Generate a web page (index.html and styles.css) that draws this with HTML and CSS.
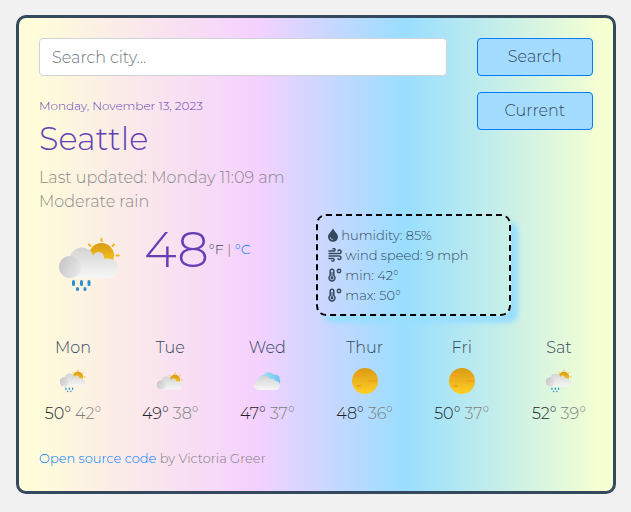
FILE: index.html
```html
<!DOCTYPE html>
<html lang="en">
<head>
<meta charset="utf-8">
<title>Weather</title>
<link rel="stylesheet" href="styles.css">
</head>
<body>
<svg class="defs" aria-hidden="true">
  <defs>
    <linearGradient id="sunFill" x1="0" y1="0" x2="0" y2="1"><stop offset="0" stop-color="#d99a12"/><stop offset="1" stop-color="#ffd027"/></linearGradient>
    <linearGradient id="cloudFill" x1="0" y1="0" x2="0" y2="1"><stop offset="0" stop-color="#d3d3d3"/><stop offset="1" stop-color="#f7f7f7"/></linearGradient>
    <linearGradient id="puffFill" x1="0" y1="0.2" x2="1" y2="0.7"><stop offset="0" stop-color="#c4c4c4"/><stop offset="1" stop-color="#e8e8e8"/></linearGradient>
    <linearGradient id="skyFill" x1="0" y1="0" x2="1" y2="0"><stop offset="0" stop-color="#b9e3f5"/><stop offset="1" stop-color="#6cc5f2"/></linearGradient>
    <symbol id="sunCloud" viewBox="0 -6 61 60">
      <path stroke="#fbb320" stroke-width="2" stroke-linecap="round" d="M42.500-4v2M30 1.500l1.500 1.500M55 1.500l-1.500 1.500M57.500 12.500h2.500"/>
      <circle cx="42.500" cy="12.500" r="12.500" fill="url(#sunFill)"/>
      <path fill="url(#cloudFill)" d="M11 35V13A12.500 12.500 0 0 1 34.500 12.500A5.500 5.500 0 0 1 45 15.500H49.500A9.750 9.750 0 0 1 49.500 35z"/>
      <circle cx="11" cy="24" r="11" fill="url(#puffFill)"/>
    </symbol>
    <symbol id="rainSun" viewBox="0 -6 61 60">
      <use href="#sunCloud" y="-6" width="61" height="60"/>
      <path stroke="#2d8fcf" stroke-width="3" stroke-linecap="round" d="M14.500 38.500v3M22.500 38.500v3M30 38.500v3M18.500 45.500v1M26 45.500v1"/>
    </symbol>
    <symbol id="thermo" viewBox="0 0 14 14">
      <path fill="none" stroke="#34495e" stroke-width="1.500" d="M2.200 7.500V3a1.800 1.800 0 0 1 3.600 0v4.500a3 3 0 1 1-3.600 0z"/>
      <path stroke="#34495e" d="M4 4v6"/>
      <circle cx="4" cy="10" r="1.400"/>
      <circle fill="none" stroke="#34495e" stroke-width="1.500" cx="11" cy="3" r="1.700"/>
    </symbol>
    <symbol id="sun" viewBox="0 0 42 42">
      <circle cx="21" cy="21" r="13" fill="url(#sunFill)"/>
      <path stroke="#f5a01d" stroke-width="2" stroke-linecap="round" d="M13 14h5M12 16h4M25 21h7M13 26h3"/>
    </symbol>
  </defs>
</svg>
<main class="card">
  <form class="search">
    <input class="field" type="search" placeholder="Search city..." aria-label="Search city">
    <div class="actions">
      <button class="btn" type="submit">Search</button>
      <button class="btn" type="button">Current</button>
    </div>
  </form>
  <header class="overview">
    <p class="date">Monday, November 13, 2023</p>
    <h1 class="city">Seattle</h1>
    <p class="note">Last updated: Monday 11:09 am</p>
    <p class="note">Moderate rain</p>
  </header>
  <section class="now">
    <div class="reading">
      <svg class="now-icon" viewBox="0 0 61 60" role="img" aria-label="Moderate rain"><use href="#rainSun" width="61" height="60"/></svg>
      <strong class="temp">48</strong>
      <span class="units">°F <span class="bar">|</span> <a href="#">°C</a></span>
    </div>
    <ul class="details">
      <li><svg class="drop" viewBox="0 0 10 14" aria-hidden="true"><path d="M5 0.500C6.500 3.500 10 6 10 9a5 4.800 0 0 1-10 0C0 6 3.500 3.500 5 0.500z"/><path class="cut" d="M2.200 9.200a2.800 2.800 0 0 0 2.600 2.500"/></svg> humidity: 85%</li>
      <li><svg class="glyph" viewBox="0 0 14 14" aria-hidden="true"><path class="line" d="M1 5.500h10.500a1.700 1.700 0 1 0-1.500-2.700M1 3h5a1.200 1.200 0 1 0-1-2M1 8h10.500a1.700 1.700 0 1 1-1.500 2.800M1 10.500h4a1.300 1.300 0 1 1-1 2.300"/></svg> wind speed: 9 mph</li>
      <li><svg class="glyph" aria-hidden="true"><use href="#thermo"/></svg> min: 42°</li>
      <li><svg class="glyph" aria-hidden="true"><use href="#thermo"/></svg> max: 50°</li>
    </ul>
  </section>
  <section class="forecast">
    <div class="day"><h2>Mon</h2><svg viewBox="-18 -21 98 98"><use href="#rainSun" width="61" height="60"/></svg><p>50° <span>42°</span></p></div>
    <div class="day"><h2>Tue</h2><svg viewBox="-18 -28 98 98"><use href="#sunCloud" width="61" height="60"/></svg><p>49° <span>38°</span></p></div>
    <div class="day"><h2>Wed</h2><svg viewBox="0 0 42 42"><path fill="url(#skyFill)" d="M12 22c0-5 3-7 6-7 2-4 8-3 10 0 4-1 6 2 5.500 4 2 3 0 6-3 7H14z"/><path fill="url(#cloudFill)" d="M13 30a5 5 0 0 1 0-10c1-5 9-5 11-1 3-1 5 1 5 2 6-1 7 9 0 9z"/></svg><p>47° <span>37°</span></p></div>
    <div class="day"><h2>Thur</h2><svg><use href="#sun"/></svg><p>48° <span>36°</span></p></div>
    <div class="day"><h2>Fri</h2><svg><use href="#sun"/></svg><p>50° <span>37°</span></p></div>
    <div class="day"><h2>Sat</h2><svg viewBox="-18 -21 98 98"><use href="#rainSun" width="61" height="60"/></svg><p>52° <span>39°</span></p></div>
  </section>
  <footer class="credit"><a href="#">Open source code</a> by Victoria Greer</footer>
</main>
</body>
</html>
```
FILE: styles.css
```css
* { box-sizing: border-box; }
body {
  margin: 0;
  padding: 15px 15px 19px 16px;
  background: #f1f1f1;
  color: #34495e;
  font: 300 16px/24px Montserrat, Inter, sans-serif;
}
h1, h2, p, ul { margin: 0; padding: 0; font-weight: 300; }
a { color: #007bff; text-decoration: none; }
.defs { position: absolute; width: 0; height: 0; }
.card {
  padding: 20px;
  border: 3px solid #34495e;
  border-radius: 10px;
  background: linear-gradient(90deg, #fffdd9 2%, #f5d1ff 40%, #99deff 65%, #f6ffd2 98%);
}
.search { display: flex; align-items: flex-start; gap: 30px; height: 60px; }
.field, .btn { height: 38px; border-radius: 4px; font: inherit; }
.field {
  flex: 1;
  min-width: 0;
  padding: 0 12px;
  border: 1px solid #ced4da;
  background: #fff;
}
.field::placeholder { color: #6c757d; opacity: 1; }
.actions { display: grid; gap: 16px; width: 21%; }
.btn { border: 1px solid #007bff; background: #a3dcff; color: #34495e; }
.date { color: #643fb5; font-size: 12px; line-height: 16px; }
.city { padding-bottom: 2px; color: #643fb5; font-size: 32px; line-height: 50px; }
.note { color: gray; opacity: 0.9; }
.now { display: grid; grid-template-columns: 1fr 1fr; align-items: start; }
.reading { display: flex; align-items: flex-start; padding: 23px 0 0 20px; }
.now-icon { width: 61px; height: 60px; margin-right: 24px; }
.temp { color: #643fb5; font-size: 50px; line-height: 26px; font-weight: 300; }
.units { font-size: 14px; line-height: 24px; }
.bar { color: #a66b50; }
.details {
  width: 195px;
  margin-bottom: 20px;
  padding: 9px 10px;
  border: 2px dashed #000;
  border-radius: 10px;
  box-shadow: 7px 7px 5px #99deff;
  list-style: none;
  font-size: 13px;
  line-height: 20px;
}
.details svg { height: 14px; vertical-align: -2px; fill: #34495e; }
.drop { width: 10px; }
.glyph { width: 14px; }
.details .line { fill: none; stroke: #34495e; stroke-width: 1.500; stroke-linecap: round; }
.details .cut { fill: none; stroke: #99c4e0; }
.forecast { display: grid; grid-template-columns: repeat(6, 68px); justify-content: space-between; text-align: center; }
.day h2 { font-size: 16px; line-height: 24px; }
.day svg { display: block; width: 42px; height: 42px; margin: 0 auto; }
.day p { color: #212529; }
.day span { color: gray; }
.credit { margin-top: 22px; padding-bottom: 3px; color: gray; font-size: 13px; line-height: 20px; }
```
